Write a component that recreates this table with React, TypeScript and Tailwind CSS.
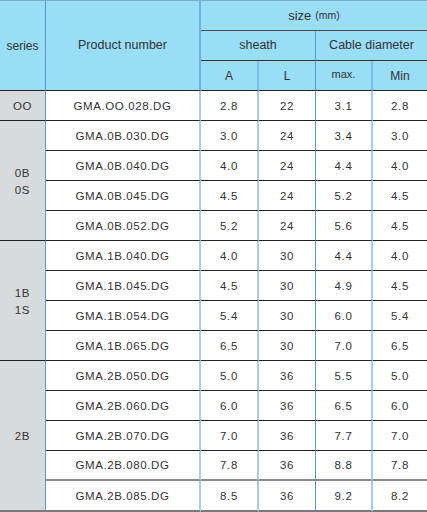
const groups = [
  {
    series: ["OO"],
    rows: [["GMA.OO.028.DG", "2.8", "22", "3.1", "2.8"]],
  },
  {
    series: ["0B", "0S"],
    rows: [
      ["GMA.0B.030.DG", "3.0", "24", "3.4", "3.0"],
      ["GMA.0B.040.DG", "4.0", "24", "4.4", "4.0"],
      ["GMA.0B.045.DG", "4.5", "24", "5.2", "4.5"],
      ["GMA.0B.052.DG", "5.2", "24", "5.6", "4.5"],
    ],
  },
  {
    series: ["1B", "1S"],
    rows: [
      ["GMA.1B.040.DG", "4.0", "30", "4.4", "4.0"],
      ["GMA.1B.045.DG", "4.5", "30", "4.9", "4.5"],
      ["GMA.1B.054.DG", "5.4", "30", "6.0", "5.4"],
      ["GMA.1B.065.DG", "6.5", "30", "7.0", "6.5"],
    ],
  },
  {
    series: ["2B"],
    rows: [
      ["GMA.2B.050.DG", "5.0", "36", "5.5", "5.0"],
      ["GMA.2B.060.DG", "6.0", "36", "6.5", "6.0"],
      ["GMA.2B.070.DG", "7.0", "36", "7.7", "7.0"],
      ["GMA.2B.080.DG", "7.8", "36", "8.8", "7.8"],
      ["GMA.2B.085.DG", "8.5", "36", "9.2", "8.2"],
    ],
  },
];

// right border of each body column after series
const bodyRight = [
  "border-r-2 border-r-[#a9cbee]",
  "border-r-2 border-r-[#a9cbee]",
  "border-r border-r-[#5a97d2]",
  "border-r-2 border-r-[#a9cbee]",
  "",
];

const cell = "flex items-center justify-center";

export default function App() {
  const total = groups.reduce((n, g) => n + g.rows.length, 0);
  let idx = 0;

  return (
    <div
      className="w-[427px] h-[512px] bg-white text-[#333]"
      style={{ fontFamily: '"Liberation Sans", Arial, sans-serif' }}
    >
      <div className="grid grid-cols-[46px_155px_58px_57px_57px_54px] grid-rows-[31px_30px_30px_repeat(13,30px)_31px]">
        {/* Header */}
        <div
          className={`${cell} row-span-3 bg-[#99ddf7] border-t border-t-[#80abc4] border-r border-r-[#5a97d2] border-b border-b-[#222] text-[12px]`}
        >
          series
        </div>
        <div
          className={`${cell} row-span-3 bg-[#99ddf7] border-t border-t-[#80abc4] border-r-2 border-r-[#6cb0e8] border-b border-b-[#222] text-[12.5px]`}
        >
          Product number
        </div>
        <div
          className={`${cell} col-span-4 bg-[#99ddf7] border-t border-t-[#80abc4] border-b border-b-[#4d4d4d] text-[13px]`}
        >
          size
          <span className="ml-[4px] text-[10.5px]">(mm)</span>
        </div>
        <div
          className={`${cell} col-span-2 bg-[#99ddf7] border-r border-r-[#5a97d2] border-b border-b-[#333] text-[12.5px]`}
        >
          sheath
        </div>
        <div
          className={`${cell} col-span-2 bg-[#99ddf7] border-b border-b-[#333] text-[12.5px]`}
        >
          Cable diameter
        </div>
        <div
          className={`${cell} bg-[#99ddf7] border-r-2 border-r-[#7dbcea] border-b border-b-[#222] text-[12px]`}
        >
          A
        </div>
        <div
          className={`${cell} bg-[#99ddf7] border-r border-r-[#5a97d2] border-b border-b-[#222] text-[12px]`}
        >
          L
        </div>
        <div
          className={`${cell} bg-[#99ddf7] border-r-2 border-r-[#7dbcea] border-b border-b-[#222] text-[11px] pb-[2px]`}
        >
          max.
        </div>
        <div
          className={`${cell} bg-[#99ddf7] border-b border-b-[#222] text-[12px]`}
        >
          Min
        </div>

        {/* Body */}
        {groups.map((g) => {
          const start = idx;
          idx += g.rows.length;
          const lastGroup = idx === total;
          return [
            <div
              key={g.series.join("")}
              className={`flex flex-col items-center justify-center bg-[#d8dbde] border-r border-r-[#5a97d2] text-[11.5px] tracking-[0.6px] leading-[17px] pt-[2px] ${
                lastGroup
                  ? "border-b-2 border-b-[#7a7a7a]"
                  : "border-b border-b-[#222]"
              }`}
              style={{ gridRow: `span ${g.rows.length}` }}
            >
              {g.series.map((s) => (
                <span key={s}>{s}</span>
              ))}
            </div>,
            ...g.rows.map((r, i) => {
              const n = start + i;
              let bottom = "border-b border-b-[#222]";
              if (n === total - 1) bottom = "border-b-2 border-b-[#7a7a7a]";
              else if (n === total - 2) bottom = "border-b-2 border-b-[#8a8a8a]";
              return r.map((v, c) => (
                <div
                  key={r[0] + c}
                  className={`${cell} ${bottom} ${bodyRight[c]} text-[11.5px] tracking-[0.6px] pt-[2px]`}
                >
                  {v}
                </div>
              ));
            }),
          ];
        })}
      </div>
    </div>
  );
}
